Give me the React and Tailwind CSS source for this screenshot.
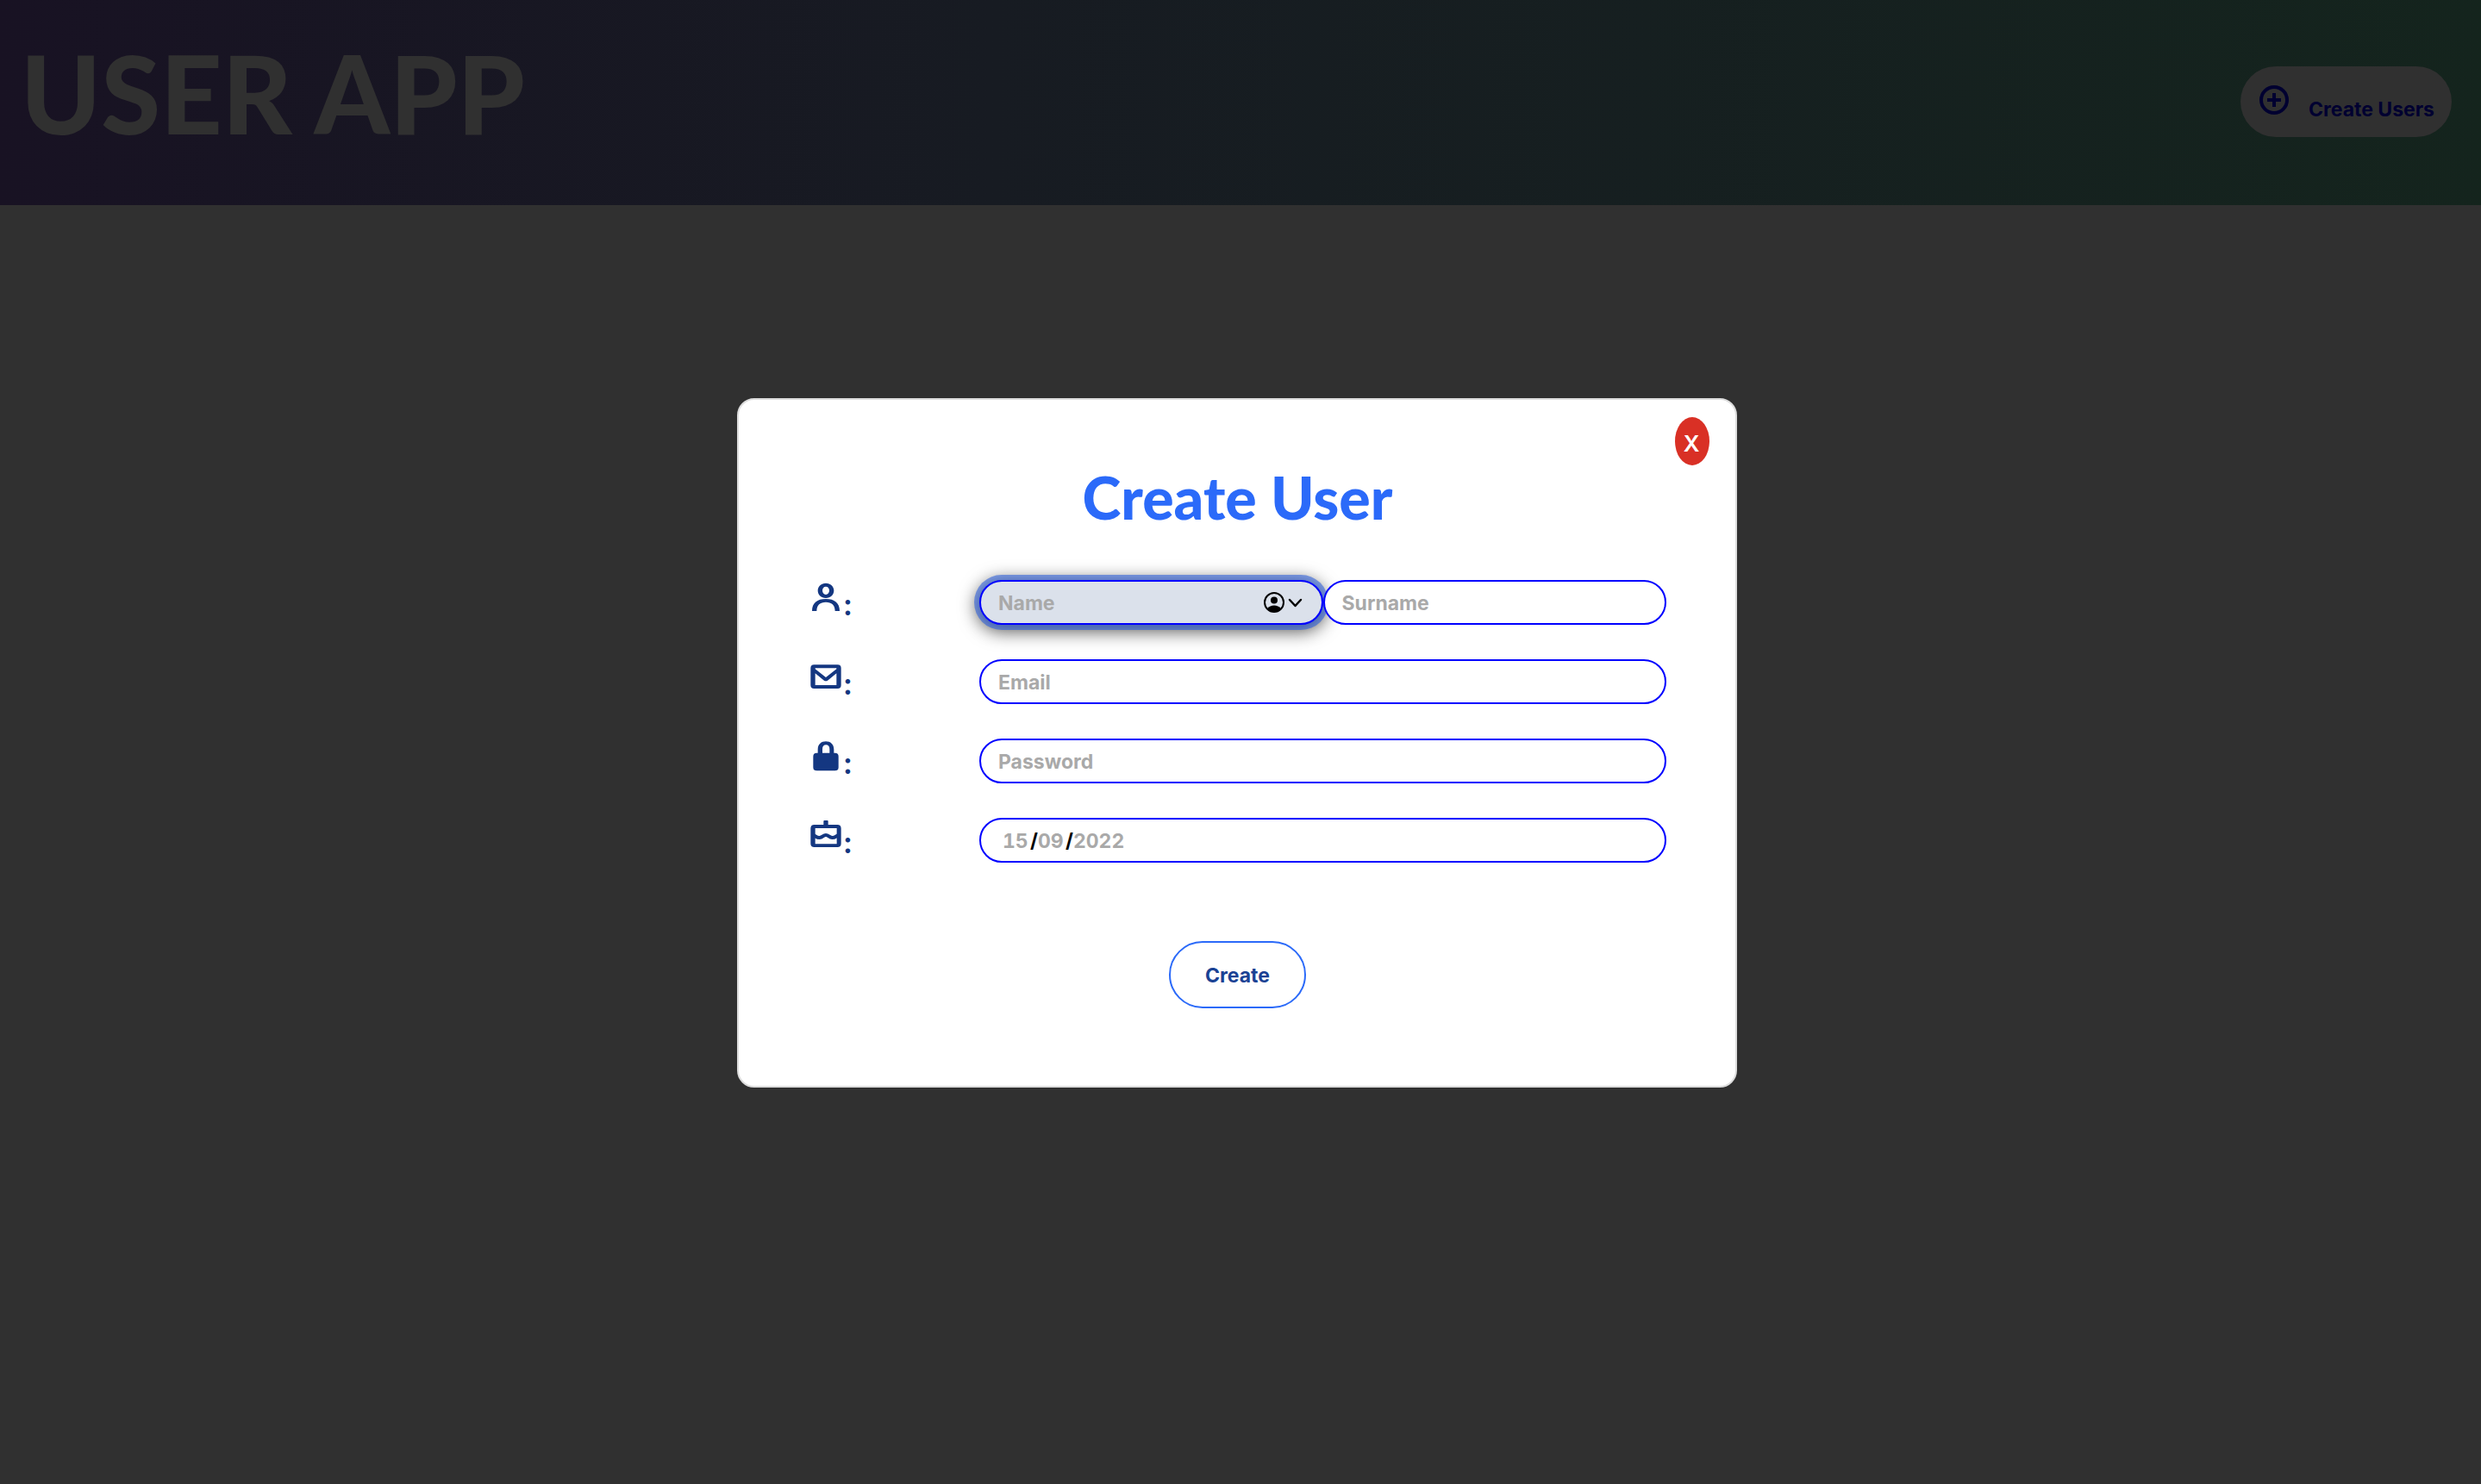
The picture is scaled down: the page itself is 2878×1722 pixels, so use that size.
const inputBase =
  "h-[52px] w-full min-w-0 rounded-full border-2 border-[#0000ff] px-5 pt-0.5 font-['Inter',sans-serif] text-[23px] font-bold text-black placeholder:text-[#a9a9a9] placeholder:opacity-100 outline-none";

const datePart =
  "border-0 bg-transparent p-0 text-left tabular-nums text-[#a9a9a9] outline-none";

function Icon({ label, children }) {
  return (
    <svg viewBox="0 0 120 120" className="size-10" fill="currentColor" role="img" aria-label={label}>
      {children}
    </svg>
  );
}

function UserIcon() {
  return (
    <Icon label="Name">
      <path
        fillRule="evenodd"
        d="M60 11c16 0 28 11 28 26S76 63 60 63 32 52 32 37s12-26 28-26Zm0 12c-7 0-12 6-12 14s5 14 12 14 12-6 12-14-5-14-12-14Z"
      />
      <path d="M12 108C12 80 30 66 60 66s48 14 48 42H92C92 87 80 77 60 77s-32 10-32 31Z" />
    </Icon>
  );
}

function MailIcon() {
  return (
    <Icon label="Email">
      <path
        fillRule="evenodd"
        d="M19 19h82q12 0 12 12v59q0 12-12 12H19q-12 0-12-12V31q0-12 12-12Zm4 12v3l37 29 37-29v-3Zm0 18v41h74V49L66 74q-6 4-12 0Z"
      />
    </Icon>
  );
}

function LockIcon() {
  return (
    <Icon label="Password">
      <path
        fillRule="evenodd"
        d="M32 50V38c0-18 12-28 28-28s28 10 28 28v12h4q12 0 12 12v39q0 11-12 11H28q-12 0-12-11V62q0-12 12-12Zm16 0h25V37c0-10-5-15-12.500-15S48 27 48 37Z"
      />
    </Icon>
  );
}

function CakeIcon() {
  return (
    <Icon label="Birthday">
      <path d="M55 9h10q3 0 3 3v13H52V12q0-3 3-3Z" />
      <path
        fillRule="evenodd"
        d="M20 24h80q13 0 13 13v53q0 12-13 12H20q-13 0-13-12V37q0-13 13-13Zm3 12v55h75V36Z"
      />
      <path
        d="M18 61c8 4 10 8 20 8 11 0 12-9 22-9s11 9 22 9c10 0 12-4 20-8"
        fill="none"
        stroke="currentColor"
        strokeWidth="12"
      />
    </Icon>
  );
}

function Row({ icon, htmlFor, children }) {
  return (
    <div className="flex items-center">
      <label
        htmlFor={htmlFor}
        className="flex h-[52px] w-[198px] shrink-0 items-start text-[#143781]"
      >
        {icon}
        <span
          className="pt-2 pl-px font-['Lato',sans-serif] text-[34px] leading-10 font-black"
          aria-hidden="true"
        >
          :
        </span>
      </label>
      <div className="flex flex-1">{children}</div>
    </div>
  );
}

export default function App() {
  return (
    <div className="min-h-screen bg-[#303030]">
      <header className="flex items-center justify-between bg-linear-to-r from-[#181223] via-[#171b22] via-40% to-[#14241d] pr-[34px] pl-6 pt-9 pb-[58px]">
        <h1 className="font-['Lato',sans-serif] text-[125px] leading-[144px] font-black text-[#303030]">
          USER APP
        </h1>
        <button
          type="button"
          className="mt-5 flex h-[82px] items-center rounded-full bg-[#303030] pr-5 pl-[19px] text-[#000030]"
        >
          <svg viewBox="0 0 40 40" className="mb-1 size-10" fill="none" stroke="currentColor" strokeWidth="4" aria-hidden="true">
            <circle cx="20" cy="20" r="15" />
            <path d="M12 20h16M20 12v16" />
          </svg>
          <span className="pt-[18px] pl-5 font-['Inter',sans-serif] text-[23px] font-bold">Create Users</span>
        </button>
      </header>

      <div className="fixed inset-0 flex items-center justify-center pt-0.5 pr-2">
        <section
          role="dialog"
          aria-modal="true"
          aria-labelledby="dialog-title"
          className="relative w-full max-w-[1160px] rounded-[20px] border-2 border-[#dddddd] bg-white pt-[77px] pr-20 pb-[90px] pl-[81px]"
        >
          <button
            type="button"
            aria-label="Close"
            className="absolute top-5 right-[30px] h-14 w-10 rounded-[50%] bg-[#d93025] pt-1 pr-0.5 font-['Inter',sans-serif] text-[26px] font-semibold text-white"
          >
            X
          </button>
          <h2
            id="dialog-title"
            className="text-center font-['Lato',sans-serif] text-[68px] leading-[72px] font-black text-[#2b6af9]"
          >
            Create User
          </h2>
          <form className="mt-[60px]">
            <div className="flex flex-col gap-10">
              <Row icon={<UserIcon />} htmlFor="name">
                <div className="relative flex-1">
                  <input
                    id="name"
                    type="text"
                    placeholder="Name"
                    className={`${inputBase} bg-[#dbe1eb] pr-20 shadow-[0_0_0_6px_rgba(37,90,220,0.55),0_4px_20px_4px_rgba(0,0,0,0.65)]`}
                  />
                  <svg
                    viewBox="0 0 46 26"
                    className="absolute top-[13px] right-6 h-[26px] w-[46px]"
                    fill="none"
                    stroke="#000"
                    strokeWidth="2"
                    aria-hidden="true"
                  >
                    <circle cx="13" cy="13" r="11" />
                    <circle cx="13" cy="10.500" r="4" fill="#000" stroke="none" />
                    <path d="M5 20.500c2-3 5-4 8-4s6 1 8 4c-4 4.500-12 4.500-16 0Z" fill="#000" stroke="none" />
                    <path d="m31 10 6.500 7L44 10" strokeWidth="2.500" strokeLinecap="round" strokeLinejoin="round" />
                  </svg>
                </div>
                <div className="relative flex-1">
                  <input
                    type="text"
                    aria-label="Surname"
                    placeholder="Surname"
                    className={`${inputBase} bg-white`}
                  />
                </div>
              </Row>
              <Row icon={<MailIcon />} htmlFor="email">
                <input id="email" type="email" placeholder="Email" className={`${inputBase} bg-white`} />
              </Row>
              <Row icon={<LockIcon />} htmlFor="password">
                <input id="password" type="password" placeholder="Password" className={`${inputBase} bg-white`} />
              </Row>
              <Row icon={<CakeIcon />} htmlFor="day">
                <div
                  role="group"
                  aria-label="Birthday"
                  className="flex h-[52px] w-full items-center rounded-full border-2 border-[#0000ff] bg-white px-[25px] pt-0.5 font-['Inter',sans-serif] text-[23px] font-bold text-black"
                >
                  <input id="day" aria-label="Day" defaultValue="15" className={`${datePart} w-8`} />
                  <span>/</span>
                  <input aria-label="Month" defaultValue="09" className={`${datePart} w-8`} />
                  <span>/</span>
                  <input aria-label="Year" defaultValue="2022" className={`${datePart} w-16`} />
                </div>
              </Row>
            </div>
            <div className="mt-[91px] flex justify-center">
              <button
                type="submit"
                className="h-[78px] rounded-full border-2 border-[#2b6af9] bg-white px-10 pt-0.5 font-['Inter',sans-serif] text-[23px] font-bold text-[#1a4294]"
              >
                Create
              </button>
            </div>
          </form>
        </section>
      </div>
    </div>
  );
}
